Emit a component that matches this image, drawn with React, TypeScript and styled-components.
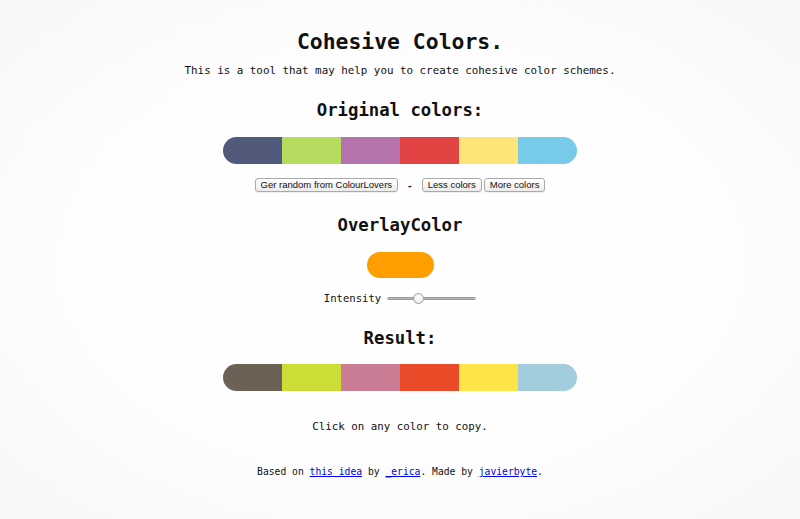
import React, { useState } from "react";
import styled, { createGlobalStyle } from "styled-components";

const Global = createGlobalStyle`
  html, body { margin: 0; padding: 0; background: #fcfcfc; }
  body { font-family: "DejaVu Sans Mono", "Liberation Mono", monospace; color: #111; }
`;

const Page = styled.main`
  display: flex;
  flex-direction: column;
  align-items: center;
  padding-top: 29px;
  min-height: 519px;
  box-sizing: border-box;
  background: radial-gradient(ellipse at center, #ffffff 0%, #fdfdfd 60%, #f7f7f7 100%);
`;

const Title = styled.h1`
  margin: 0;
  font-size: 21.4px;
  line-height: 26px;
  font-weight: bold;
`;

const Subtitle = styled.p`
  margin: 9px 0 0;
  font-size: 10.85px;
  line-height: 14px;
`;

const Heading = styled.h2<{ $top: number }>`
  margin: ${(p) => p.$top}px 0 0;
  font-size: 17.3px;
  line-height: 22px;
  font-weight: bold;
`;

const Palette = styled.div<{ $top: number }>`
  margin-top: ${(p) => p.$top}px;
  display: flex;
  width: 354px;
  height: 27px;
  border-radius: 13.5px;
  overflow: hidden;
`;

const Swatch = styled.div<{ $c: string }>`
  flex: 1;
  background: ${(p) => p.$c};
  cursor: pointer;
`;

const ButtonRow = styled.div`
  margin-top: 14px;
  display: flex;
  align-items: center;
  height: 14px;
`;

const Btn = styled.button`
  font-family: "Liberation Sans", Arial, sans-serif;
  font-size: 9.5px;
  height: 14px;
  line-height: 12px;
  padding: 0 5px;
  margin: 0 1px;
  border: 1px solid #a9a9a9;
  border-radius: 3px;
  color: #111;
  background: linear-gradient(#ffffff, #ececec);
  box-shadow: 0 1px 0 rgba(0, 0, 0, 0.06);
`;

const Dash = styled.span`
  font-family: "Liberation Sans", Arial, sans-serif;
  font-size: 11px;
  margin: 0 9px;
  font-weight: bold;
`;

const Overlay = styled.div`
  margin-top: 16px;
  width: 67px;
  height: 26px;
  border-radius: 13px;
  background: #ff9e00;
`;

const SliderRow = styled.label`
  margin-top: 12px;
  display: flex;
  align-items: center;
  height: 16px;
  font-size: 10.6px;
  gap: 6px;
`;

const Range = styled.input`
  -webkit-appearance: none;
  appearance: none;
  width: 89px;
  height: 12px;
  margin: 0;
  background: transparent;
  &::-webkit-slider-runnable-track {
    height: 3px;
    border-radius: 2px;
    background: linear-gradient(#a5a5a5, #cdcdcd);
    border: 0.5px solid #9a9a9a;
  }
  &::-webkit-slider-thumb {
    -webkit-appearance: none;
    width: 11px;
    height: 11px;
    border-radius: 50%;
    background: radial-gradient(circle at 50% 35%, #ffffff, #e6e6e6);
    border: 1px solid #9c9c9c;
    margin-top: -5px;
    box-sizing: border-box;
  }
`;

const Note = styled.p`
  margin: 29px 0 0;
  font-size: 10.8px;
  line-height: 14px;
`;

const Footer = styled.p`
  margin: 32px 0 0;
  font-size: 9.7px;
  line-height: 12px;
`;

const Link = styled.a`
  color: #0000ee;
  text-decoration: underline;
`;

const original = ["#525a7c", "#b5dc5e", "#b473ad", "#e24444", "#ffe477", "#77cbe8"];
const result = ["#6b6155", "#cbdd36", "#c97c93", "#e94b28", "#fde547", "#a1cddd"];

export default function App() {
  const [intensity, setIntensity] = useState(32);
  return (
    <>
      <Global />
      <Page>
        <Title>Cohesive Colors.</Title>
        <Subtitle>This is a tool that may help you to create cohesive color schemes.</Subtitle>
        <Heading $top={21}>Original colors:</Heading>
        <Palette $top={16}>
          {original.map((c) => (
            <Swatch key={c} $c={c} />
          ))}
        </Palette>
        <ButtonRow>
          <Btn>Ger random from ColourLovers</Btn>
          <Dash>-</Dash>
          <Btn>Less colors</Btn>
          <Btn>More colors</Btn>
        </ButtonRow>
        <Heading $top={22}>OverlayColor</Heading>
        <Overlay />
        <SliderRow>
          Intensity
          <Range
            type="range"
            min={0}
            max={100}
            value={intensity}
            onChange={(e) => setIntensity(Number(e.target.value))}
          />
        </SliderRow>
        <Heading $top={21}>Result:</Heading>
        <Palette $top={15}>
          {result.map((c) => (
            <Swatch key={c} $c={c} />
          ))}
        </Palette>
        <Note>Click on any color to copy.</Note>
        <Footer>
          Based on <Link href="#">this idea</Link> by <Link href="#">_erica</Link>. Made by{" "}
          <Link href="#">javierbyte</Link>.
        </Footer>
      </Page>
    </>
  );
}
